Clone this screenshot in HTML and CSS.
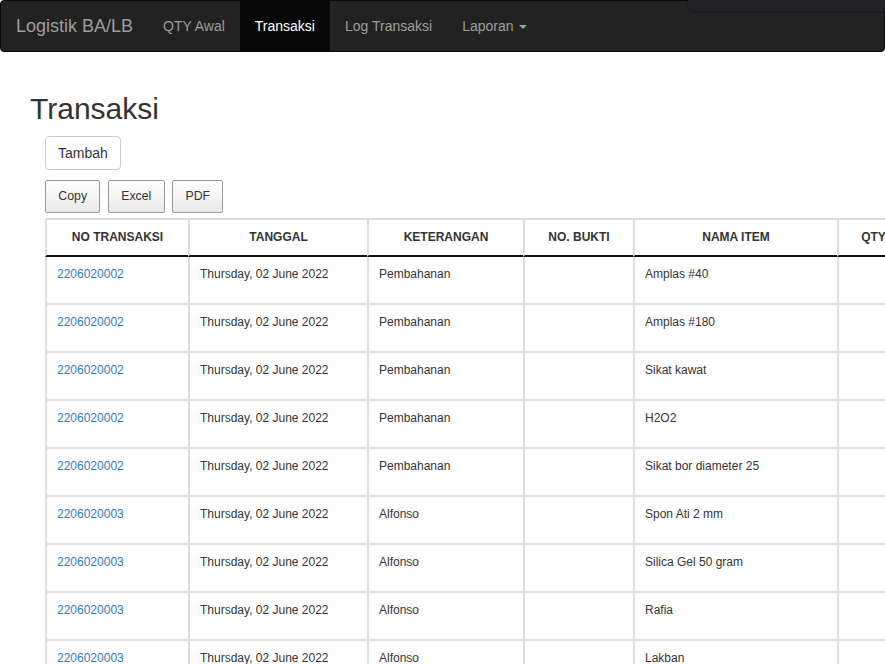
FILE: index.html
```html
<!DOCTYPE html>
<html lang="id">
<head>
<meta charset="utf-8">
<title>Transaksi</title>
<link rel="stylesheet" href="styles.css">
</head>
<body>
<nav class="navbar">
  <a class="brand" href="#">Logistik BA/LB</a>
  <ul class="nav">
    <li><a href="#">QTY Awal</a></li>
    <li class="active"><a href="#">Transaksi</a></li>
    <li><a href="#">Log Transaksi</a></li>
    <li><a href="#">Laporan <span class="caret"></span></a></li>
  </ul>
</nav>
<div class="overlay"></div>
<main class="main">
  <h2 class="title">Transaksi</h2>
  <div class="content">
    <div class="add-row"><button class="btn">Tambah</button></div>
    <div class="dt-buttons">
      <button class="dt-btn">Copy</button>
      <button class="dt-btn">Excel</button>
      <button class="dt-btn">PDF</button>
    </div>
    <div class="table-wrap">
      <table class="grid">
        <thead>
          <tr>
            <th class="c1">NO TRANSAKSI</th>
            <th class="c2">TANGGAL</th>
            <th class="c3">KETERANGAN</th>
            <th class="c4">NO. BUKTI</th>
            <th class="c5">NAMA ITEM</th>
            <th class="c6">QTY</th>
            <th class="c7">SATUAN</th>
          </tr>
        </thead>
        <tbody>
          <tr><td><a href="#">2206020002</a></td><td>Thursday, 02 June 2022</td><td>Pembahanan</td><td></td><td>Amplas #40</td><td></td><td></td></tr>
          <tr><td><a href="#">2206020002</a></td><td>Thursday, 02 June 2022</td><td>Pembahanan</td><td></td><td>Amplas #180</td><td></td><td></td></tr>
          <tr><td><a href="#">2206020002</a></td><td>Thursday, 02 June 2022</td><td>Pembahanan</td><td></td><td>Sikat kawat</td><td></td><td></td></tr>
          <tr><td><a href="#">2206020002</a></td><td>Thursday, 02 June 2022</td><td>Pembahanan</td><td></td><td>H2O2</td><td></td><td></td></tr>
          <tr><td><a href="#">2206020002</a></td><td>Thursday, 02 June 2022</td><td>Pembahanan</td><td></td><td>Sikat bor diameter 25</td><td></td><td></td></tr>
          <tr><td><a href="#">2206020003</a></td><td>Thursday, 02 June 2022</td><td>Alfonso</td><td></td><td>Spon Ati 2 mm</td><td></td><td></td></tr>
          <tr><td><a href="#">2206020003</a></td><td>Thursday, 02 June 2022</td><td>Alfonso</td><td></td><td>Silica Gel 50 gram</td><td></td><td></td></tr>
          <tr><td><a href="#">2206020003</a></td><td>Thursday, 02 June 2022</td><td>Alfonso</td><td></td><td>Rafia</td><td></td><td></td></tr>
          <tr><td><a href="#">2206020003</a></td><td>Thursday, 02 June 2022</td><td>Alfonso</td><td></td><td>Lakban</td><td></td><td></td></tr>
        </tbody>
      </table>
    </div>
  </div>
</main>
</body>
</html>
```

FILE: styles.css
```css
* { box-sizing: border-box; }

html, body {
  margin: 0;
  padding: 0;
  overflow: hidden;
}

body {
  font-family: "Liberation Sans", Arial, sans-serif;
  font-size: 14px;
  line-height: 1.42857;
  color: #333;
  background: #fff;
}

a { color: #337ab7; text-decoration: none; }

.navbar {
  display: flex;
  align-items: stretch;
  min-height: 52px;
  background: #222;
  border: 1px solid #080808;
  border-radius: 4px;
  margin-bottom: 20px;
}

.brand {
  display: block;
  padding: 15px;
  height: 50px;
  font-size: 18px;
  line-height: 20px;
  color: #9d9d9d;
}

.nav {
  display: flex;
  list-style: none;
  margin: 0;
  padding: 0;
}

.nav a {
  display: block;
  padding: 15px;
  line-height: 20px;
  color: #9d9d9d;
}

.nav .active a {
  color: #fff;
  background: #080808;
}

.caret {
  display: inline-block;
  width: 0;
  height: 0;
  margin-left: 2px;
  vertical-align: middle;
  border-top: 4px solid #9d9d9d;
  border-left: 4px solid transparent;
  border-right: 4px solid transparent;
}

.overlay {
  position: fixed;
  top: 0;
  right: 0;
  width: 197px;
  height: 11px;
  background: #202124;
  border-bottom-left-radius: 5px;
  box-shadow: 0 1px 3px rgba(0, 0, 0, 0.35);
}

.main {
  display: flow-root;
  padding: 0 30px;
}

.title {
  margin: 20px 0 11px;
  font-size: 30px;
  font-weight: 500;
  line-height: 1.1;
  color: #333;
}

.content {
  margin-left: 15px;
}

.add-row {
  margin-bottom: 10px;
}

.btn {
  font-family: inherit;
  font-size: 14px;
  line-height: 20px;
  padding: 6px 12px;
  color: #333;
  background: #fff;
  border: 1px solid #ccc;
  border-radius: 4px;
  height: 34px;
}

.dt-buttons {
  display: flex;
  gap: 7.5px;
  margin-bottom: 5px;
}

.dt-btn {
  font-family: inherit;
  font-size: 12.32px;
  line-height: 19px;
  height: 33px;
  padding: 6px 12.32px;
  color: #333;
  border: 1px solid #999;
  border-radius: 2px;
  background: linear-gradient(to bottom, #ffffff 0%, #e9e9e9 100%);
}

.table-wrap {
  width: 1200px;
}

.grid {
  border-spacing: 0;
  table-layout: fixed;
  border-top: 2px solid #ddd;
  font-size: 12px;
  line-height: 17px;
}

.grid th, .grid td {
  box-sizing: content-box;
  border-left: 2px solid #ddd;
  border-bottom: 2px solid #ddd;
  text-align: left;
  vertical-align: top;
}

.grid th {
  padding: 9px 10px;
  font-weight: bold;
  text-align: center;
  color: #333;
  border-bottom-color: #111;
}

.grid td {
  padding: 9px 10px 20px;
  color: #333;
}

.grid .c1 { width: 121px; }
.grid .c2 { width: 157px; }
.grid .c3 { width: 134px; }
.grid .c4 { width: 88px; }
.grid .c5 { width: 182px; }
.grid .c6 { width: 49px; }
.grid .c7 { width: 100px; }
```
